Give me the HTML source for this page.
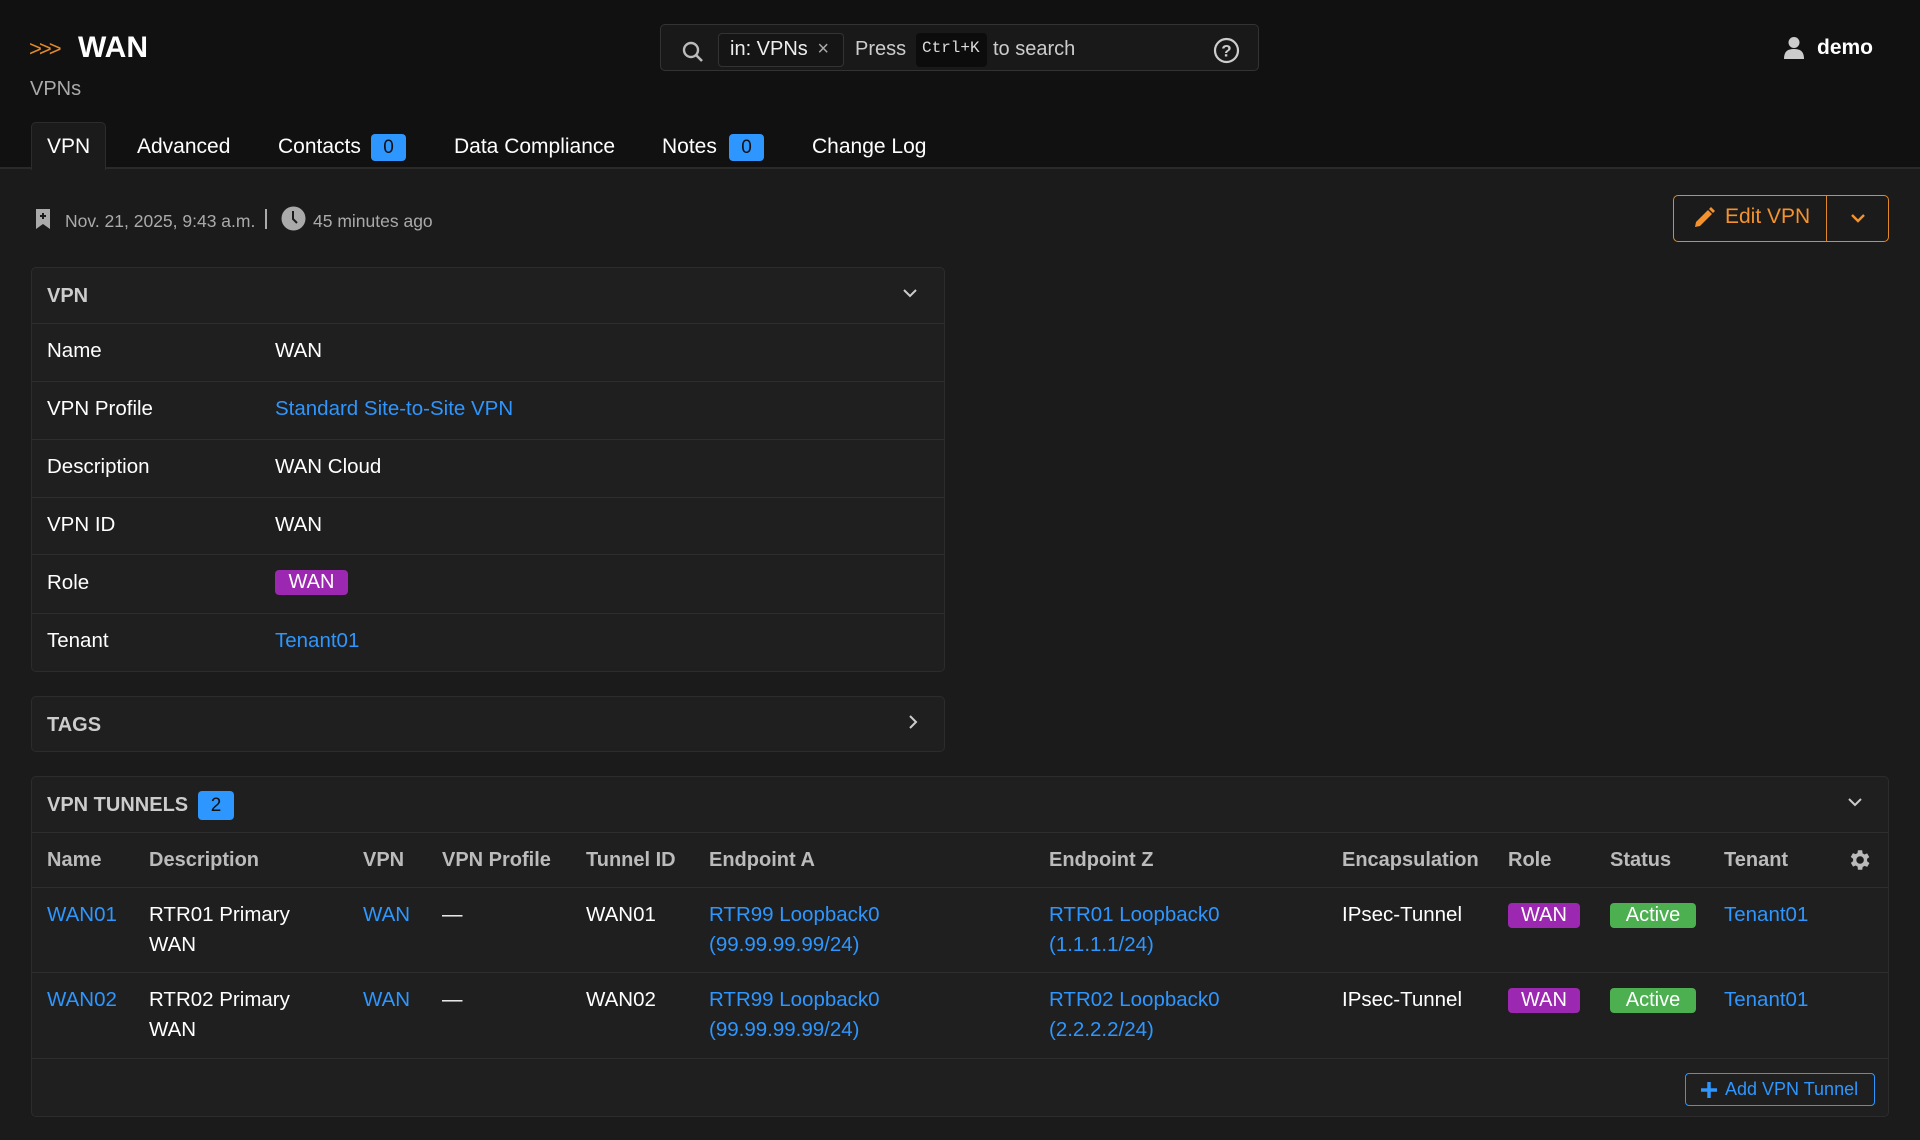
<!DOCTYPE html>
<html><head><meta charset="utf-8"><style>
*{box-sizing:border-box;margin:0;padding:0}
body{width:1920px;height:1140px;background:#1b1b1b;font-family:"Liberation Sans",sans-serif;color:#fff;position:relative;overflow:hidden;font-size:20.5px}
.a{position:absolute;white-space:nowrap}
.hdr{position:absolute;left:0;top:0;width:1920px;height:169px;background:#111;border-bottom:2px solid #2a2a2a}
.link{color:#2d96ff}
.badge{display:inline-block;background:#2d96ff;color:#111;border-radius:4px;text-align:center}
.card{position:absolute;background:#1f1f1f;border:1px solid #2c2c2c;border-radius:5px}
.hl{position:absolute;left:0;right:0;height:1px;background:#2e2e2e}
.lbl{color:#ccc;font-weight:bold}
.pill{position:absolute;border-radius:4px;color:#fff;text-align:center;height:25px;line-height:25px;font-size:20px}
.th{color:#bbb;font-weight:bold;font-size:20px}
</style></head><body>
<div class="hdr"></div>
<div class="a" style="left:29px;top:36px;color:#e0892a;font-size:22px;letter-spacing:-3px">&gt;&gt;&gt;</div>
<div class="a" style="left:78px;top:31px;font-size:30px;font-weight:bold">WAN</div>
<div class="a" style="left:30px;top:78px;font-size:20px;color:#aaa">VPNs</div>

<div class="a" style="left:660px;top:24px;width:599px;height:47px;border:1px solid #333;border-radius:5px;background:#191919"></div>
<svg class="a" style="left:681px;top:40px" width="24" height="24" viewBox="0 0 24 24"><circle cx="10" cy="10" r="7" fill="none" stroke="#bbb" stroke-width="2.4"/><line x1="15" y1="15" x2="21" y2="21" stroke="#bbb" stroke-width="2.6"/></svg>
<div class="a" style="left:718px;top:33px;width:126px;height:34px;border:1px solid #333;border-radius:4px;background:#151515"></div>
<div class="a" style="left:730px;top:38px;font-size:20px;color:#eee">in: VPNs <span style="color:#aaa;margin-left:4px">×</span></div>
<div class="a" style="left:855px;top:38px;font-size:20px;color:#ccc">Press</div>
<div class="a" style="left:916px;top:33px;width:71px;height:34px;background:#0c0c0c;border-radius:4px;font-family:'Liberation Mono',monospace;font-size:16px;color:#ddd;padding:6px 0 0 6px">Ctrl+K</div>
<div class="a" style="left:993px;top:38px;font-size:20px;color:#ccc">to search</div>
<svg class="a" style="left:1213px;top:37px" width="27" height="27" viewBox="0 0 27 27"><circle cx="13.5" cy="13.5" r="11.5" fill="none" stroke="#ccc" stroke-width="2.2"/><text x="13.5" y="19.5" text-anchor="middle" fill="#ccc" font-size="17" font-weight="bold" font-family="Liberation Sans">?</text></svg>
<svg class="a" style="left:1783px;top:36px" width="22" height="24" viewBox="0 0 22 24"><circle cx="11" cy="6.5" r="5.5" fill="#ccc"/><path d="M1 23 C1 15 5 13 11 13 C17 13 21 15 21 23 Z" fill="#ccc"/></svg>
<div class="a" style="left:1817px;top:36px;font-size:21px;font-weight:bold">demo</div>

<div class="a" style="left:31px;top:122px;width:75px;height:48px;background:#1b1b1b;border:1px solid #2c2c2c;border-bottom:none;border-radius:5px 5px 0 0"></div>
<div class="a" style="left:47px;top:135px;font-size:21px">VPN</div>
<div class="a" style="left:137px;top:135px;font-size:21px">Advanced</div>
<div class="a" style="left:278px;top:135px;font-size:21px">Contacts</div>
<div class="a badge" style="left:371px;top:134px;width:35px;height:27px;font-size:19px;line-height:27px">0</div>
<div class="a" style="left:454px;top:135px;font-size:21px">Data Compliance</div>
<div class="a" style="left:662px;top:135px;font-size:21px">Notes</div>
<div class="a badge" style="left:729px;top:134px;width:35px;height:27px;font-size:19px;line-height:27px">0</div>
<div class="a" style="left:812px;top:135px;font-size:21px">Change Log</div>

<svg class="a" style="left:35px;top:208px" width="16" height="22" viewBox="0 0 16 22"><path d="M1 1H15V21L8 16L1 21Z" fill="#aaa"/><path d="M8 5V11M5 8H11" stroke="#1b1b1b" stroke-width="2"/></svg>
<div class="a" style="left:65px;top:211px;font-size:17.5px;color:#aaa">Nov. 21, 2025, 9:43 a.m.</div>
<div class="a" style="left:265px;top:209px;width:2px;height:20px;background:#aaa"></div>
<svg class="a" style="left:281px;top:206px" width="25" height="25" viewBox="0 0 25 25"><circle cx="12.5" cy="12.5" r="12" fill="#aaa"/><path d="M12 5V13L16 17" stroke="#1b1b1b" stroke-width="2" fill="none"/></svg>
<div class="a" style="left:313px;top:211px;font-size:17.5px;color:#aaa">45 minutes ago</div>

<div class="a" style="left:1673px;top:195px;width:216px;height:47px;border:1px solid #e0892a;border-radius:5px"></div>
<div class="a" style="left:1826px;top:195px;width:1px;height:47px;background:#e0892a"></div>
<svg class="a" style="left:1692px;top:206px" width="24" height="24" viewBox="0 0 24 24"><path d="M3 21L4 16L16 4L20 8L8 20Z" fill="#f3922e"/><path d="M17 3L19 1L23 5L21 7Z" fill="#f3922e"/></svg>
<div class="a" style="left:1725px;top:205px;font-size:21px;color:#f3922e">Edit VPN</div>
<svg class="a" style="left:1850px;top:211px" width="16" height="14" viewBox="0 0 16 14"><path d="M2 4L8 10L14 4" stroke="#f3922e" stroke-width="2.4" fill="none"/></svg>

<div class="card" style="left:31px;top:267px;width:914px;height:405px">
 <div class="a lbl" style="left:15px;top:17px;font-size:20px">VPN</div>
 <svg class="a" style="left:870px;top:18px" width="16" height="14" viewBox="0 0 16 14"><path d="M2 4L8 10L14 4" stroke="#ccc" stroke-width="2" fill="none"/></svg>
 <div class="hl" style="top:55px"></div>
 <div class="a" style="left:15px;top:71px">Name</div><div class="a" style="left:243px;top:71px">WAN</div>
 <div class="hl" style="top:113px"></div>
 <div class="a" style="left:15px;top:129px">VPN Profile</div><div class="a link" style="left:243px;top:129px">Standard Site-to-Site VPN</div>
 <div class="hl" style="top:171px"></div>
 <div class="a" style="left:15px;top:187px">Description</div><div class="a" style="left:243px;top:187px">WAN Cloud</div>
 <div class="hl" style="top:229px"></div>
 <div class="a" style="left:15px;top:245px">VPN ID</div><div class="a" style="left:243px;top:245px">WAN</div>
 <div class="hl" style="top:286px"></div>
 <div class="a" style="left:15px;top:303px">Role</div><div class="pill" style="left:243px;top:302px;width:73px;background:#9c27b0">WAN</div>
 <div class="hl" style="top:345px"></div>
 <div class="a" style="left:15px;top:361px">Tenant</div><div class="a link" style="left:243px;top:361px">Tenant01</div>
</div>

<div class="card" style="left:31px;top:696px;width:914px;height:56px">
 <div class="a lbl" style="left:15px;top:17px;font-size:20px">TAGS</div>
 <svg class="a" style="left:874px;top:16px" width="14" height="18" viewBox="0 0 14 18"><path d="M4 3L10 9L4 15" stroke="#ccc" stroke-width="2" fill="none"/></svg>
</div>

<div class="card" style="left:31px;top:776px;width:1858px;height:341px">
 <div class="a lbl" style="left:15px;top:17px;font-size:20px">VPN TUNNELS</div>
 <div class="a badge" style="left:166px;top:14px;width:36px;height:29px;font-size:19px;line-height:29px">2</div>
 <svg class="a" style="left:1815px;top:18px" width="16" height="14" viewBox="0 0 16 14"><path d="M2 4L8 10L14 4" stroke="#ccc" stroke-width="2" fill="none"/></svg>
 <div class="hl" style="top:55px"></div>
 <div class="a th" style="left:15px;top:72px">Name</div>
 <div class="a th" style="left:117px;top:72px">Description</div>
 <div class="a th" style="left:331px;top:72px">VPN</div>
 <div class="a th" style="left:410px;top:72px">VPN Profile</div>
 <div class="a th" style="left:554px;top:72px">Tunnel ID</div>
 <div class="a th" style="left:677px;top:72px">Endpoint A</div>
 <div class="a th" style="left:1017px;top:72px">Endpoint Z</div>
 <div class="a th" style="left:1310px;top:72px">Encapsulation</div>
 <div class="a th" style="left:1476px;top:72px">Role</div>
 <div class="a th" style="left:1578px;top:72px">Status</div>
 <div class="a th" style="left:1692px;top:72px">Tenant</div>
 <svg class="a" style="left:1814px;top:70px" width="26" height="26" viewBox="0 0 24 24"><path fill="#bbb" d="M19.4 13a7.5 7.5 0 0 0 0-2l2.1-1.6-2-3.5-2.5 1a7.4 7.4 0 0 0-1.7-1L15 3h-4l-.4 2.6a7.4 7.4 0 0 0-1.7 1l-2.5-1-2 3.5L6.6 11a7.5 7.5 0 0 0 0 2l-2.1 1.6 2 3.5 2.5-1a7.4 7.4 0 0 0 1.7 1L11 21h4l.4-2.6a7.4 7.4 0 0 0 1.7-1l2.5 1 2-3.5ZM13 15.5A3.5 3.5 0 1 1 13 8.5a3.5 3.5 0 0 1 0 7Z"/></svg>
 <div class="hl" style="top:110px"></div>
 <div style="position:absolute;left:0;top:0;line-height:30px">
 <div class="a link" style="left:15px;top:123px">WAN01</div>
 <div class="a" style="left:117px;top:123px">RTR01 Primary<br>WAN</div>
 <div class="a link" style="left:331px;top:123px">WAN</div>
 <div class="a" style="left:410px;top:123px">—</div>
 <div class="a" style="left:554px;top:123px">WAN01</div>
 <div class="a link" style="left:677px;top:123px">RTR99 Loopback0<br>(99.99.99.99/24)</div>
 <div class="a link" style="left:1017px;top:123px">RTR01 Loopback0<br>(1.1.1.1/24)</div>
 <div class="a" style="left:1310px;top:123px">IPsec-Tunnel</div>
 <div class="a link" style="left:1692px;top:123px">Tenant01</div>
 </div>
 <div class="pill" style="left:1476px;top:126px;width:72px;background:#9c27b0">WAN</div>
 <div class="pill" style="left:1578px;top:126px;width:86px;background:#4caf50">Active</div>
 <div class="hl" style="top:195px"></div>
 <div style="position:absolute;left:0;top:0;line-height:30px">
 <div class="a link" style="left:15px;top:208px">WAN02</div>
 <div class="a" style="left:117px;top:208px">RTR02 Primary<br>WAN</div>
 <div class="a link" style="left:331px;top:208px">WAN</div>
 <div class="a" style="left:410px;top:208px">—</div>
 <div class="a" style="left:554px;top:208px">WAN02</div>
 <div class="a link" style="left:677px;top:208px">RTR99 Loopback0<br>(99.99.99.99/24)</div>
 <div class="a link" style="left:1017px;top:208px">RTR02 Loopback0<br>(2.2.2.2/24)</div>
 <div class="a" style="left:1310px;top:208px">IPsec-Tunnel</div>
 <div class="a link" style="left:1692px;top:208px">Tenant01</div>
 </div>
 <div class="pill" style="left:1476px;top:211px;width:72px;background:#9c27b0">WAN</div>
 <div class="pill" style="left:1578px;top:211px;width:86px;background:#4caf50">Active</div>
 <div class="hl" style="top:281px"></div>
 <div class="a" style="left:1653px;top:296px;width:190px;height:33px;border:1px solid #2d96ff;border-radius:4px"></div>
 <svg class="a" style="left:1668px;top:304px" width="18" height="18" viewBox="0 0 18 18"><path d="M9 1V17M1 9H17" stroke="#2d96ff" stroke-width="3.5"/></svg>
 <div class="a link" style="left:1693px;top:302px;font-size:18px">Add VPN Tunnel</div>
</div>
</body></html>
